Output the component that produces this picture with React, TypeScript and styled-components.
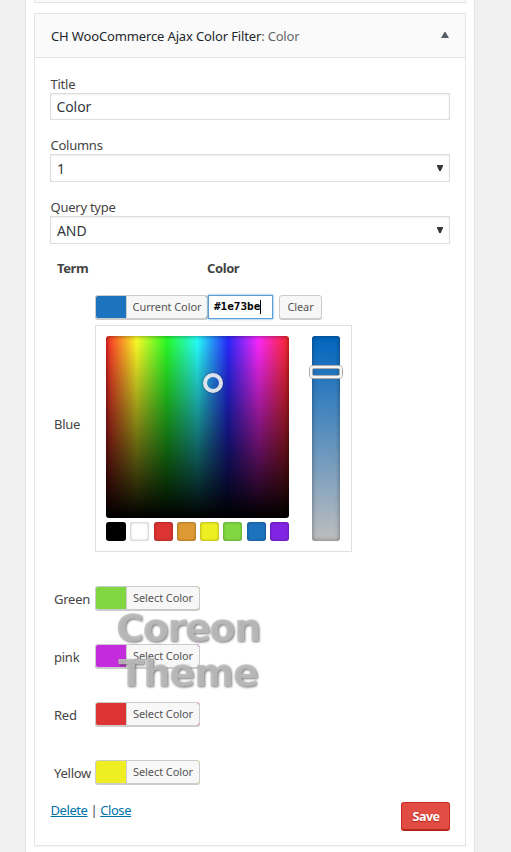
import React from 'react';
import styled, { createGlobalStyle } from 'styled-components';

const Global = createGlobalStyle`
  *, *::before, *::after { box-sizing: border-box; }
  body {
    margin: 0;
    background: #f0f0f0;
    color: #444;
    font: 13px/18px "Noto Sans", "Open Sans", sans-serif;
    letter-spacing: -0.25px;
    overflow: hidden;
  }
`;

const Sidebar = styled.main`
  width: 450px;
  height: 852px;
  margin-left: 25px;
  padding: 0 8px;
  border: solid #e5e5e5;
  border-width: 0 1px;
  background: #fff;
  overflow: hidden;
`;

const PreviousWidget = styled.div`
  height: 3px;
  margin-bottom: 10px;
  border: 1px solid #e5e5e5;
  border-top: 0;
  background: #fafafa;
`;

const Widget = styled.section`
  height: 833px;
  border: 1px solid #e5e5e5;
  box-shadow: 0 1px 1px rgba(0, 0, 0, 0.04);
`;

const WidgetHeader = styled.header`
  display: flex;
  align-items: center;
  justify-content: space-between;
  height: 44px;
  padding: 1px 16px 0;
  border-bottom: 1px solid #e5e5e5;
  background: #fafafa;
`;

const WidgetTitle = styled.h3`
  margin: 0;
  font-size: 13px;
  font-weight: 400;
  letter-spacing: -0.14px;
  color: #23282d;
  white-space: nowrap;
`;

const Muted = styled.span`
  color: #666;
  letter-spacing: -0.2px;
`;

const HeaderArrow = styled.svg`
  margin-top: -2px;
`;

const Content = styled.div`
  padding: 17px 15px 0;
`;

const Field = styled.label<{ $gap: number }>`
  display: block;
  margin-bottom: ${p => p.$gap}px;
`;

const FieldLabel = styled.span`
  display: block;
  height: 18px;
  padding-left: 0.5px;
`;

const Control = styled.span<{ $select?: boolean }>`
  display: flex;
  align-items: center;
  justify-content: space-between;
  height: ${p => (p.$select ? 28 : 27)}px;
  padding: ${p => (p.$select ? '2px 6px 0' : '1px 6px 0 5.5px')};
  border: 1px solid #ddd;
  background: #fff;
  box-shadow: inset 0 1px 2px rgba(0, 0, 0, 0.07);
  color: #32373c;
  font-size: 14px;
  letter-spacing: -0.1px;
`;

const SelectArrow = styled.svg`
  margin-top: -3px;
`;

const TableHead = styled.div`
  display: grid;
  grid-template-columns: 150px 1fr;
  height: 18px;
  padding-left: 7px;
  font-weight: 700;
  letter-spacing: -0.4px;
`;

const TermRow = styled.div<{ $height: number }>`
  display: grid;
  grid-template-columns: 41px 1fr;
  align-items: center;
  height: ${p => p.$height}px;
  padding-left: 4px;
  white-space: nowrap;
`;

const PickerRow = styled(TermRow)`
  margin-top: 17px;
`;

const Toolbar = styled.div`
  display: flex;
  height: 25px;
`;

const ColorButton = styled.div<{ $color: string; $width: number }>`
  display: flex;
  width: ${p => p.$width}px;
  height: 24px;
  border: 1px solid #ccc;
  border-radius: 3px;
  background: ${p => p.$color};
  box-shadow: 0 1px 0 #ccc;
  overflow: hidden;
`;

const ButtonText = styled.span`
  flex: 1;
  margin-left: 30px;
  border-left: 1px solid #ccc;
  border-radius: 0 2px 2px 0;
  background: #f7f7f7;
  color: #555;
  font-size: 11px;
  line-height: 22px;
  letter-spacing: -0.1px;
  text-align: center;
`;

const HexInput = styled.div`
  display: flex;
  align-items: center;
  width: 65px;
  height: 24px;
  padding-left: 5px;
  border: 1px solid #5b9dd9;
  background: #fff;
  box-shadow: 0 0 2px rgba(30, 140, 190, 0.8);
  color: #000;
  font: bold 11px "DejaVu Sans Mono", monospace;
  letter-spacing: 0;
`;

const Caret = styled.span`
  width: 1px;
  height: 14px;
  background: #000;
`;

const ClearButton = styled.div`
  width: 43px;
  height: 24px;
  margin-left: 6px;
  border: 1px solid #ccc;
  border-radius: 3px;
  background: #f7f7f7;
  box-shadow: 0 1px 0 #ccc;
  color: #555;
  font-size: 11px;
  line-height: 22px;
  letter-spacing: -0.1px;
  text-align: center;
`;

const Picker = styled.div`
  display: flex;
  justify-content: space-between;
  width: 257px;
  height: 227px;
  margin-top: 5px;
  padding: 10px 11px 10px 10px;
  border: 1px solid #dfdfdf;
  background: #fff;
`;

const Spectrum = styled.div`
  position: relative;
  width: 183px;
  height: 182px;
  border-radius: 3px;
  background:
    linear-gradient(to bottom, transparent, #000),
    linear-gradient(to right, #ff2828, #ffff28, #28ff28, #28ffff, #2828ff, #ff28ff, #ff2828);
  box-shadow: inset 0 0 5px rgba(0, 0, 0, 0.5);
`;

const Handle = styled.span`
  position: absolute;
  left: 97px;
  top: 37px;
  width: 20px;
  height: 20px;
  border: 4px solid rgba(230, 232, 238, 0.95);
  border-radius: 50%;
  box-shadow: 0 0 2px rgba(0, 0, 0, 0.65);
`;

const Palette = styled.div`
  display: flex;
  justify-content: space-between;
  margin-top: 4px;
`;

const Swatch = styled.span<{ $color: string; $wide?: boolean }>`
  width: ${p => (p.$wide ? 20 : 19)}px;
  height: 19px;
  border-radius: 3px;
  background: ${p => p.$color};
  box-shadow: inset 0 0 3px rgba(0, 0, 0, 0.4);
`;

const Strip = styled.div`
  position: relative;
  width: 28px;
  height: 205px;
  border-radius: 3px;
  background: linear-gradient(to bottom, #0065be, #bebebe);
  box-shadow: inset 0 0 5px rgba(0, 0, 0, 0.4);
`;

const StripHandle = styled.span`
  position: absolute;
  left: -3px;
  top: 29px;
  width: 34px;
  height: 14px;
  border: 1px solid #aaa;
  border-radius: 4px;

  &::before {
    content: '';
    position: absolute;
    inset: 0;
    border: 3px solid #f5f5f5;
    border-width: 3px 2px;
    border-radius: 3px;
  }

  &::after {
    content: '';
    position: absolute;
    inset: 2px;
    border: 1px solid #aaa;
    border-radius: 2px;
  }
`;

const Terms = styled.div`
  position: relative;
  margin-top: 17px;
`;

const TermName = styled.span`
  padding-top: 2px;
`;

const Watermark = styled.div`
  position: absolute;
  left: 66px;
  top: 37px;
  width: 144px;
  color: rgba(190, 190, 190, 0.88);
  font: bold 38px/45px "DejaVu Sans", sans-serif;
  text-align: center;
  white-space: nowrap;
  filter: drop-shadow(1px 1px 0.8px rgba(50, 50, 50, 0.75));
`;

const WatermarkLine = styled.div<{ $spacing: number }>`
  letter-spacing: ${p => p.$spacing}px;
`;

const Footer = styled.footer`
  display: flex;
  justify-content: space-between;
  align-items: flex-start;
  padding-left: 0.5px;
  letter-spacing: -0.42px;
`;

const Link = styled.a`
  color: #0073aa;
  text-decoration: underline;
`;

const SaveButton = styled.button`
  width: 49px;
  height: 29px;
  margin-top: 1px;
  padding: 0 0 1px 1px;
  border: 1px solid #c92c24;
  border-bottom-color: #b32019;
  border-radius: 3px;
  background: #e14d43;
  box-shadow: inset 0 -1px 0 #ba281e;
  color: #fff;
  font: bold 12.5px "Noto Sans", sans-serif;
  letter-spacing: -0.5px;
  text-shadow: 0 1px 1px #b32019;
`;

const palette = ['#000', '#fff', '#dd3333', '#dd9933', '#eeee22', '#81d742', '#1e73be', '#8224e3'];

const terms = [
  { name: 'Green', color: '#81d742' },
  { name: 'pink', color: '#c42bdd' },
  { name: 'Red', color: '#dd3333' },
  { name: 'Yellow', color: '#eeee22' },
];

function SelectField({ label, value, gap }: { label: string; value: string; gap: number }) {
  return (
    <Field $gap={gap}>
      <FieldLabel>{label}</FieldLabel>
      <Control $select>
        {value}
        <SelectArrow width="6" height="6" viewBox="0 0 6 6">
          <path d="M0 0H6V1L3.8 6H2.2L0 1Z" fill="#32373c" />
        </SelectArrow>
      </Control>
    </Field>
  );
}

export default function App() {
  return (
    <>
      <Global />
      <Sidebar>
        <PreviousWidget />
        <Widget>
          <WidgetHeader>
            <WidgetTitle>
              CH WooCommerce Ajax Color Filter<Muted>: Color</Muted>
            </WidgetTitle>
            <HeaderArrow width="8" height="6" viewBox="0 0 8 6">
              <path d="M3.5 0H4.5L8 6H0Z" fill="#555d66" />
            </HeaderArrow>
          </WidgetHeader>
          <Content>
            <Field $gap={16}>
              <FieldLabel>Title</FieldLabel>
              <Control>Color</Control>
            </Field>
            <SelectField label="Columns" value="1" gap={16} />
            <SelectField label="Query type" value="AND" gap={15} />
            <TableHead>
              <span>Term</span>
              <span>Color</span>
            </TableHead>
            <PickerRow $height={258}>
              <TermName>Blue</TermName>
              <div>
                <Toolbar>
                  <ColorButton $color="#1e73be" $width={113}>
                    <ButtonText>Current Color</ButtonText>
                  </ColorButton>
                  <HexInput>
                    #1e73be
                    <Caret />
                  </HexInput>
                  <ClearButton>Clear</ClearButton>
                </Toolbar>
                <Picker>
                  <div>
                    <Spectrum>
                      <Handle />
                    </Spectrum>
                    <Palette>
                      {palette.map((color, i) => (
                        <Swatch key={color} $color={color} $wide={i === 0} />
                      ))}
                    </Palette>
                  </div>
                  <Strip>
                    <StripHandle />
                  </Strip>
                </Picker>
              </div>
            </PickerRow>
            <Terms>
              {terms.map(term => (
                <TermRow key={term.name} $height={58}>
                  <TermName>{term.name}</TermName>
                  <ColorButton $color={term.color} $width={105}>
                    <ButtonText>Select Color</ButtonText>
                  </ColorButton>
                </TermRow>
              ))}
              <Watermark>
                <WatermarkLine $spacing={-1.3}>Coreon</WatermarkLine>
                <WatermarkLine $spacing={-0.9}>Theme</WatermarkLine>
              </Watermark>
            </Terms>
            <Footer>
              <span>
                <Link>Delete</Link> | <Link>Close</Link>
              </span>
              <SaveButton>Save</SaveButton>
            </Footer>
          </Content>
        </Widget>
      </Sidebar>
    </>
  );
}
